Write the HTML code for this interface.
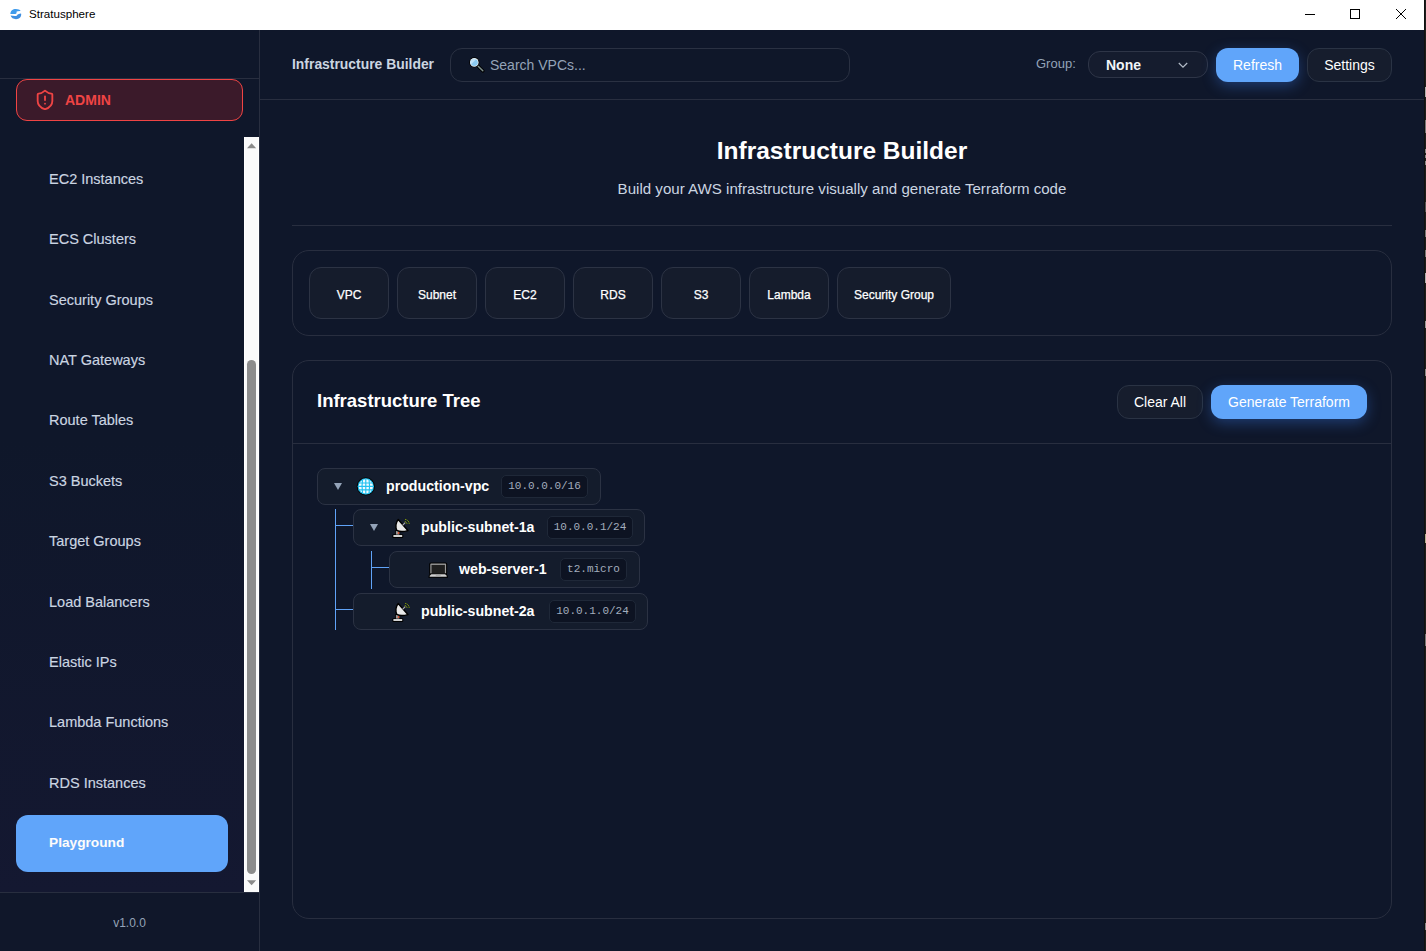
<!DOCTYPE html>
<html><head><meta charset="utf-8">
<style>
*{box-sizing:border-box;margin:0;padding:0}
html,body{width:1426px;height:951px;overflow:hidden;background:#0f172a;font-family:"Liberation Sans",sans-serif}
.abs{position:absolute}
#titlebar{position:absolute;left:0;top:0;width:1426px;height:30px;background:#fff}
#titlebar .t{position:absolute;left:29px;top:6px;font-size:11.6px;color:#000;line-height:16px}
#rstrip{position:absolute;left:1424px;top:0;width:2px;height:951px;background:linear-gradient(90deg,#111 0 1px,#1e1e1c 1px)}
#sidebar{position:absolute;left:0;top:30px;width:260px;height:921px;background:#0f172a;border-right:1px solid #282e3f}
#sbhead{position:absolute;left:0;top:0;width:259px;height:49px;border-bottom:1px solid #282e3f}
#admin{position:absolute;left:16px;top:49px;width:227px;height:42px;border:1.5px solid #ef4444;border-radius:11px;background:#3b1a2a}
#admin .lbl{position:absolute;left:48px;top:12px;font-weight:bold;font-size:14px;color:#ef4444;line-height:16px}
#nav{position:absolute;left:0;top:107px;width:259px;height:755px;overflow:hidden;background:linear-gradient(180deg,#0f172a 0%,#0f172a 40%,#141831 100%)}
.item{position:absolute;left:16px;width:212px;height:56.6px;border-radius:12px;color:#cbd5e1;font-size:14.5px;line-height:56px;padding-left:33px;-webkit-text-stroke:0.15px #cbd5e1}
.item.active{background:#60a5fa;color:#fff;font-weight:bold;font-size:13.7px}
#sbar{position:absolute;left:244px;top:107px;width:15px;height:755px;background:#fafafa;border-left:1px solid #fff;border-right:1px solid #fff}
#footer{position:absolute;left:0;top:862px;width:259px;height:59px;border-top:1px solid #282e3f;background:#10172a}
#footer .v{position:absolute;left:0;width:259px;text-align:center;top:23px;font-size:12px;color:#94a3b8;line-height:14px}
#main{position:absolute;left:260px;top:30px;width:1164px;height:921px;background:#0f172a}
#mhead{position:absolute;left:0;top:0;width:1164px;height:70px;border-bottom:1px solid #282e3f}
.btn{position:absolute;height:34px;border-radius:12px;font-size:14px;line-height:34px;text-align:center;color:#fff}
.btn.dark{background:#161d2d;border:1px solid #2a3344;line-height:32px}
.btn.blue{background:#60a5fa;box-shadow:0 4px 14px rgba(59,130,246,0.35)}
.box{position:absolute;left:32px;width:1100px;border:1px solid #282e3f;border-radius:17px}
.pal{position:absolute;top:16px;width:80px;height:52px;border:1px solid #2c3344;background:#151c2c;border-radius:12px;color:#fff;font-size:12px;line-height:54px;text-align:center;-webkit-text-stroke:0.25px #fff}
.node{position:absolute;height:37px;border:1px solid #2b3243;background:#141c2c;border-radius:8px}
.node .nm{position:absolute;top:9px;font-weight:bold;font-size:14.2px;color:#fff;line-height:17px}
.badge{position:absolute;top:6px;height:23px;border:1px solid #1f2838;background:#0d1322;border-radius:5px;font-family:"Liberation Mono",monospace;font-size:11px;color:#a3adbd;line-height:21px;text-align:center}
.tri{position:absolute;top:14px;width:0;height:0;border-left:4px solid transparent;border-right:4px solid transparent;border-top:7px solid #94a3b8}
.vl{position:absolute;width:1px;background:#60a3f8}
.hl{position:absolute;height:1px;background:#60a3f8}
</style></head><body>
<div id="titlebar">
  <svg class="abs" style="left:10px;top:8px" width="12" height="12" viewBox="0 0 12 12"><path d="M0.4 5.9 C0.3 2.8 2.8 0.9 5.8 0.9 C8.2 0.9 9.8 1.6 10.6 2.7 L10 3.1 L7.6 3.2 C6.6 3.3 6.1 3.8 6.6 4.5 C7 5.3 6 6 4.2 6 Z" fill="#3f9bec"/><path d="M0.6 7.6 L5 8 C6.6 8.1 7.4 7.3 7.6 6.5 L10.4 5.6 L11.2 5.8 C11.4 9.2 9.3 11.2 6 11.2 C3.2 11.2 1.3 9.8 0.6 7.6 Z" fill="#3f8fe0"/></svg>
  <div class="t">Stratusphere</div>
  <svg class="abs" style="left:1300px;top:0" width="120" height="30" viewBox="0 0 120 30">
    <path d="M5 14.5 H15" stroke="#000" stroke-width="1"/>
    <rect x="50.5" y="9.5" width="9" height="9" fill="none" stroke="#000" stroke-width="1"/>
    <path d="M96 9 L106 19 M106 9 L96 19" stroke="#000" stroke-width="1"/>
  </svg>
</div>

<div id="sidebar">
  <div id="sbhead"></div>
  <div id="admin">
    <svg class="abs" style="left:17px;top:8px" width="22" height="24" viewBox="0 0 24 24" fill="none" stroke="#ef4444" stroke-width="2" stroke-linecap="round" stroke-linejoin="round"><path d="M20 13c0 5-3.5 7.5-7.66 8.95a1 1 0 0 1-.67-.01C7.5 20.5 4 18 4 13V6a1 1 0 0 1 1-1c2 0 4.5-1.2 6.24-2.72a1.17 1.17 0 0 1 1.52 0C14.51 3.81 17 5 19 5a1 1 0 0 1 1 1z"/><path d="M12 8v4"/><path d="M12 16h.01"/></svg>
    <div class="lbl">ADMIN</div>
  </div>
  <div id="nav">
    <div class="item" style="top:14px">EC2 Instances</div>
    <div class="item" style="top:74.4px">ECS Clusters</div>
    <div class="item" style="top:134.7px">Security Groups</div>
    <div class="item" style="top:195.1px">NAT Gateways</div>
    <div class="item" style="top:255.4px">Route Tables</div>
    <div class="item" style="top:315.8px">S3 Buckets</div>
    <div class="item" style="top:376.2px">Target Groups</div>
    <div class="item" style="top:436.5px">Load Balancers</div>
    <div class="item" style="top:496.9px">Elastic IPs</div>
    <div class="item" style="top:557.2px">Lambda Functions</div>
    <div class="item" style="top:617.6px">RDS Instances</div>
    <div class="item active" style="top:678px">Playground</div>
  </div>
  <div id="sbar">
    <svg class="abs" style="left:2px;top:5.5px" width="10" height="6" viewBox="0 0 10 6"><path d="M0 5.3 L4.6 0.3 L9.2 5.3Z" fill="#8a8a8a"/></svg>
    <div class="abs" style="left:2px;top:223px;width:9px;height:514px;background:#8c8c8c;border-radius:4.5px"></div>
    <svg class="abs" style="left:2px;top:743px" width="10" height="6" viewBox="0 0 10 6"><path d="M0 0.2 L9.2 0.2 L4.6 5.2Z" fill="#8a8a8a"/></svg>
  </div>
  <div id="footer"><div class="v">v1.0.0</div></div>
</div>

<div id="main">
  <div id="mhead">
    <div class="abs" style="left:32px;top:26px;font-weight:bold;font-size:13.9px;color:#cbd5e1;line-height:16px">Infrastructure Builder</div>
    <div class="abs" style="left:190px;top:18px;width:400px;height:34px;border:1px solid #2a3142;border-radius:12px;background:#0f1729"></div>
    <svg class="abs" style="left:208px;top:26px" width="18" height="18" viewBox="0 0 18 18"><path d="M9.8 9.9 L14.9 14.9" stroke="#000" stroke-width="3.4" stroke-linecap="round"/><path d="M10.2 10.3 L14.8 14.8" stroke="#7f918e" stroke-width="1.5" stroke-linecap="round"/><circle cx="6.3" cy="6.4" r="5.1" fill="#000"/><circle cx="6.3" cy="6.4" r="4.3" fill="#eef2f4"/><circle cx="6.3" cy="6.4" r="3.5" fill="#8ccbf2"/><path d="M3.2 8.2 A3.5 3.5 0 0 1 8.1 3.3 Z" fill="#bfe3f8"/></svg>
    <div class="abs" style="left:230px;top:27px;font-size:14px;color:#94a3b8;line-height:16px">Search VPCs...</div>
    <div class="abs" style="left:776px;top:26px;font-size:13px;color:#94a3b8;line-height:15px">Group:</div>
    <div class="abs" style="left:828px;top:21px;width:120px;height:27px;border:1px solid #2e3547;border-radius:12px;background:#151c2e"></div>
    <div class="abs" style="left:846px;top:27px;font-size:14px;font-weight:bold;color:#f1f5f9;line-height:16px">None</div>
    <svg class="abs" style="left:918px;top:31.5px" width="11" height="7" viewBox="0 0 11 7"><path d="M0.8 1 L5 5.2 L9.2 1" fill="none" stroke="#b4bcc8" stroke-width="1.2"/></svg>
    <div class="btn blue" style="left:956px;top:18px;width:83px">Refresh</div>
    <div class="btn dark" style="left:1047px;top:18px;width:85px">Settings</div>
  </div>

  <div class="abs" style="left:0;top:107px;width:1164px;text-align:center;font-weight:bold;font-size:24.5px;color:#fff;line-height:28px">Infrastructure Builder</div>
  <div class="abs" style="left:0;top:150px;width:1164px;text-align:center;font-size:15.1px;color:#cbd5e1;line-height:18px">Build your AWS infrastructure visually and generate Terraform code</div>
  <div class="abs" style="left:32px;top:195px;width:1100px;height:1px;background:#282e3f"></div>

  <div class="box" style="top:220px;height:86px">
    <div class="pal" style="left:16px">VPC</div>
    <div class="pal" style="left:104px">Subnet</div>
    <div class="pal" style="left:192px">EC2</div>
    <div class="pal" style="left:280px">RDS</div>
    <div class="pal" style="left:368px">S3</div>
    <div class="pal" style="left:456px">Lambda</div>
    <div class="pal" style="left:544px;width:114px">Security Group</div>
  </div>

  <div class="box" style="top:330px;height:559px">
    <div class="abs" style="left:24px;top:29px;font-weight:bold;font-size:18.5px;color:#fff;line-height:22px">Infrastructure Tree</div>
    <div class="btn dark" style="left:824px;top:24px;width:86px">Clear All</div>
    <div class="btn blue" style="left:918px;top:24px;width:156px">Generate Terraform</div>
    <div class="abs" style="left:0;top:82px;width:1098px;height:1px;background:#282e3f"></div>
  </div>
</div>

<!-- tree (absolute page coords) -->
<div class="node" style="left:317px;top:468px;width:284px">
  <div class="tri" style="left:16px"></div>
  <svg class="abs" style="left:38px;top:8px" width="20" height="20" viewBox="0 0 20 20"><circle cx="9.8" cy="9.4" r="9.1" fill="#050505"/><circle cx="9.8" cy="9.4" r="8.1" fill="#22c1f1"/><circle cx="9.8" cy="9.4" r="7.1" fill="#f2fbff"/><g stroke="#22c1f1" stroke-width="1.15" fill="none"><path d="M9.8 1.5 V17.3 M1.8 9.4 H17.8 M2.6 6 H17 M2.6 12.8 H17"/><path d="M6.6 2.2 Q5.4 9.4 6.6 16.6 M13 2.2 Q14.2 9.4 13 16.6"/></g></svg>
  <div class="nm" style="left:68px">production-vpc</div>
  <div class="badge" style="left:183px;width:87px">10.0.0.0/16</div>
</div>
<div class="vl" style="left:335px;top:509px;height:121px"></div>
<div class="hl" style="left:335px;top:525px;width:18px"></div>
<div class="hl" style="left:335px;top:609px;width:18px"></div>
<div class="node" style="left:353px;top:509px;width:292px">
  <div class="tri" style="left:16px"></div>
  <svg class="abs" style="left:34px;top:2px" width="26" height="30" viewBox="0 0 26 30"><rect x="4.3" y="22.2" width="11" height="3.8" rx="1.2" fill="#000"/><rect x="5.4" y="23" width="8.8" height="2" fill="#d2d2d2"/><rect x="7" y="18.3" width="5.2" height="4.6" fill="#000"/><rect x="7.9" y="19" width="3.4" height="3.6" fill="#9a9a9a"/><circle cx="10.6" cy="21" r=".9" fill="#e04a2a"/><path d="M10.2 7.6 C7.4 10.2 7.3 15.8 8.8 18.4 C12 20.2 16.6 19.6 19.9 18.6 Z" fill="#e8e8e8" stroke="#000" stroke-width="1.5" stroke-linejoin="round"/><path d="M14.6 13.4 L17.2 10.6" stroke="#b0b0b0" stroke-width="1.1"/><g fill="none" stroke="#9cba00" stroke-width="1" stroke-dasharray="1.2 .6"><path d="M16.8 9.6 A2.4 2.4 0 0 1 19 11.8"/><path d="M17 7.4 A4.6 4.6 0 0 1 21.2 11.8"/></g></svg>
  <div class="nm" style="left:67px">public-subnet-1a</div>
  <div class="badge" style="left:193px;width:86px">10.0.0.1/24</div>
</div>
<div class="vl" style="left:371px;top:551px;height:38px"></div>
<div class="hl" style="left:371px;top:567px;width:18px"></div>
<div class="node" style="left:389px;top:551px;width:251px">
  <svg class="abs" style="left:38px;top:10px" width="21" height="16" viewBox="0 0 21 16"><rect x="1.2" y="0.6" width="18" height="12" rx="1.6" fill="#000"/><rect x="2.3" y="1.6" width="15.8" height="10.5" rx=".8" fill="#9a9a9a"/><rect x="3.5" y="2.9" width="13.4" height="8.6" fill="#1f1f1f"/><path d="M0.4 15.8 L0.9 13 L2.6 11.3 H17.8 L19.5 13 L20 15.8 Z" fill="#000"/><path d="M1.6 14.8 L2 13.4 L3.3 12.2 H17.1 L18.4 13.4 L18.8 14.8Z" fill="#d0d0d0"/><rect x="7.7" y="13.1" width="5" height=".8" fill="#a4a4a4"/></svg>
  <div class="nm" style="left:69px">web-server-1</div>
  <div class="badge" style="left:170px;width:67px">t2.micro</div>
</div>
<div class="node" style="left:353px;top:593px;width:295px">
  <svg class="abs" style="left:34px;top:2px" width="26" height="30" viewBox="0 0 26 30"><rect x="4.3" y="22.2" width="11" height="3.8" rx="1.2" fill="#000"/><rect x="5.4" y="23" width="8.8" height="2" fill="#d2d2d2"/><rect x="7" y="18.3" width="5.2" height="4.6" fill="#000"/><rect x="7.9" y="19" width="3.4" height="3.6" fill="#9a9a9a"/><circle cx="10.6" cy="21" r=".9" fill="#e04a2a"/><path d="M10.2 7.6 C7.4 10.2 7.3 15.8 8.8 18.4 C12 20.2 16.6 19.6 19.9 18.6 Z" fill="#e8e8e8" stroke="#000" stroke-width="1.5" stroke-linejoin="round"/><path d="M14.6 13.4 L17.2 10.6" stroke="#b0b0b0" stroke-width="1.1"/><g fill="none" stroke="#9cba00" stroke-width="1" stroke-dasharray="1.2 .6"><path d="M16.8 9.6 A2.4 2.4 0 0 1 19 11.8"/><path d="M17 7.4 A4.6 4.6 0 0 1 21.2 11.8"/></g></svg>
  <div class="nm" style="left:67px">public-subnet-2a</div>
  <div class="badge" style="left:195px;width:87px">10.0.1.0/24</div>
</div>

<div id="rstrip"></div>
<div class="abs" style="left:1425px;top:87px;width:1px;height:10px;background:#b0b0b0"></div><div class="abs" style="left:1425px;top:120px;width:1px;height:13px;background:#777"></div><div class="abs" style="left:1425px;top:149px;width:1px;height:4px;background:#888"></div><div class="abs" style="left:1425px;top:155px;width:1px;height:3px;background:#888"></div><div class="abs" style="left:1425px;top:161px;width:1px;height:4px;background:#888"></div><div class="abs" style="left:1425px;top:202px;width:1px;height:10px;background:#555"></div><div class="abs" style="left:1425px;top:230px;width:1px;height:7px;background:#777"></div><div class="abs" style="left:1425px;top:250px;width:1px;height:7px;background:#777"></div><div class="abs" style="left:1425px;top:273px;width:1px;height:10px;background:#b0b0b0"></div><div class="abs" style="left:1425px;top:321px;width:1px;height:7px;background:#999"></div><div class="abs" style="left:1425px;top:369px;width:1px;height:7px;background:#888"></div><div class="abs" style="left:1425px;top:534px;width:1px;height:9px;background:#b5b090"></div><div class="abs" style="left:1425px;top:634px;width:1px;height:12px;background:#777"></div><div class="abs" style="left:1425px;top:923px;width:1px;height:7px;background:#888"></div>
</body></html>
